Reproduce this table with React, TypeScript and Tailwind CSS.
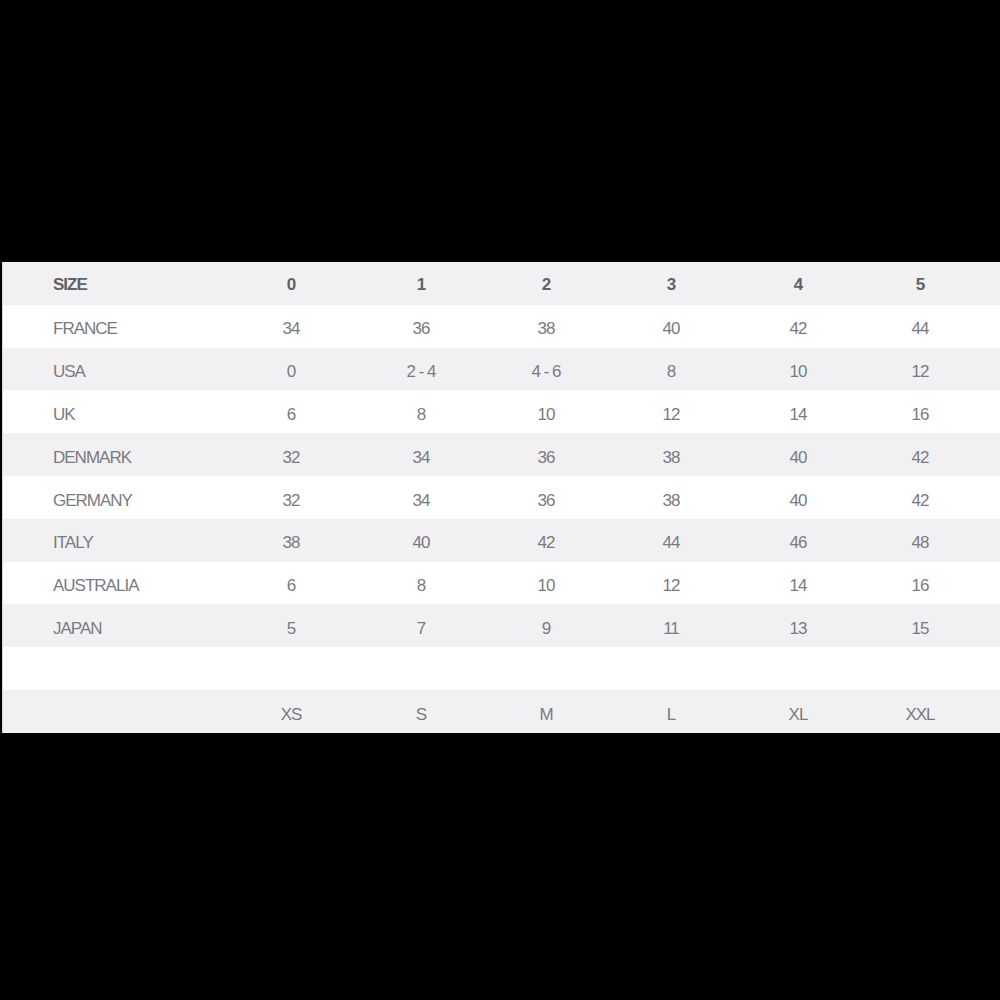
const sizes = ["0", "1", "2", "3", "4", "5"];

const rows: { label: string; values: string[] }[] = [
  { label: "FRANCE", values: ["34", "36", "38", "40", "42", "44"] },
  { label: "USA", values: ["0", "2-4", "4-6", "8", "10", "12"] },
  { label: "UK", values: ["6", "8", "10", "12", "14", "16"] },
  { label: "DENMARK", values: ["32", "34", "36", "38", "40", "42"] },
  { label: "GERMANY", values: ["32", "34", "36", "38", "40", "42"] },
  { label: "ITALY", values: ["38", "40", "42", "44", "46", "48"] },
  { label: "AUSTRALIA", values: ["6", "8", "10", "12", "14", "16"] },
  { label: "JAPAN", values: ["5", "7", "9", "11", "13", "15"] },
  { label: "", values: ["", "", "", "", "", ""] },
  { label: "", values: ["XS", "S", "M", "L", "XL", "XXL"] },
];

const grid =
  "grid grid-cols-[223px_130px_130px_120px_130px_124px_120px_1fr] items-center h-[42.8px]";

export default function App() {
  return (
    <div
      className="min-h-[1000px] w-[1000px] bg-black pt-[262px]"
      style={{ fontFamily: '"Liberation Sans", Arial, sans-serif' }}
    >
      <div className="ml-[2px] border-l border-[#d8d8da] bg-white">
        {/* Cabecera */}
        <div
          className={`${grid} pt-[2px] bg-[#f1f1f3] text-[#616165] font-semibold text-[17px] tracking-[-1px]`}
        >
          <div className="pl-[50px]">SIZE</div>
          {sizes.map((s, i) => (
            <div key={i} className="text-center">
              {s}
            </div>
          ))}
          <div />
        </div>

        {rows.map((row, index) => (
          <div
            key={index}
            className={`${grid} pt-[6px] text-[#7b7b7f] text-[17px] tracking-[-1px] ${
              index % 2 === 0 ? "bg-white" : "bg-[#f1f1f3]"
            }`}
          >
            <div className="pl-[50px]">{row.label}</div>
            {row.values.map((v, i) => (
              <div key={i} className="text-center">
                {v.includes("-") ? v.replace("-", " - ") : v}
              </div>
            ))}
            <div />
          </div>
        ))}
      </div>
    </div>
  );
}
